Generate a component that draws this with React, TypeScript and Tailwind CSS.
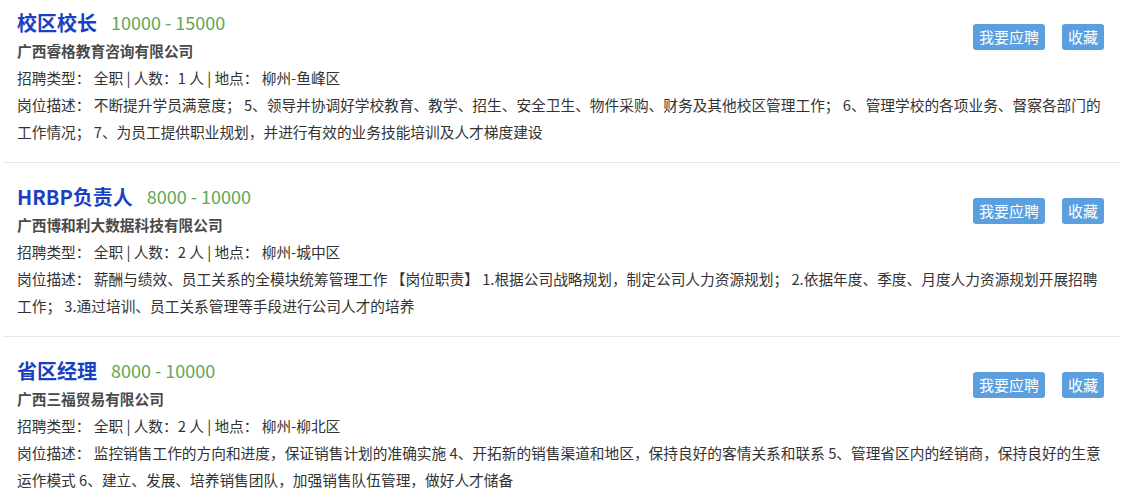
import { JSX } from 'react'

interface Job {
  title: string
  salary: string
  company: string
  type: string
  count: number
  location: string
  description: string
}

const JOBS: Job[] = [
  {
    title: '校区校长',
    salary: '10000 - 15000',
    company: '广西睿格教育咨询有限公司',
    type: '全职',
    count: 1,
    location: '柳州-鱼峰区',
    description:
      '不断提升学员满意度； 5、领导并协调好学校教育、教学、招生、安全卫生、物件采购、财务及其他校区管理工作； 6、管理学校的各项业务、督察各部门的工作情况； 7、为员工提供职业规划，并进行有效的业务技能培训及人才梯度建设'
  },
  {
    title: 'HRBP负责人',
    salary: '8000 - 10000',
    company: '广西博和利大数据科技有限公司',
    type: '全职',
    count: 2,
    location: '柳州-城中区',
    description:
      '薪酬与绩效、员工关系的全模块统筹管理工作 【岗位职责】 1.根据公司战略规划，制定公司人力资源规划； 2.依据年度、季度、月度人力资源规划开展招聘工作； 3.通过培训、员工关系管理等手段进行公司人才的培养'
  },
  {
    title: '省区经理',
    salary: '8000 - 10000',
    company: '广西三福贸易有限公司',
    type: '全职',
    count: 2,
    location: '柳州-柳北区',
    description:
      '监控销售工作的方向和进度，保证销售计划的准确实施 4、开拓新的销售渠道和地区，保持良好的客情关系和联系 5、管理省区内的经销商，保持良好的生意运作模式 6、建立、发展、培养销售团队，加强销售队伍管理，做好人才储备'
  }
]

function JobCard({ job }: { job: Job }): JSX.Element {
  const info = `招聘类型： ${job.type} | 人数：${job.count} 人 | 地点： ${job.location}`
  const desc = `岗位描述： ${job.description}`

  return (
    <div className="border-b border-[#e6e6e6] pt-[19px] pr-[16px] pb-[17px] pl-[14px]">
      <div className="flex items-start justify-between">
        <div>
          <div className="flex h-[29px] items-center">
            <h3 className="text-[20px] font-bold leading-[29px] text-[#1b3fc2]">{job.title}</h3>
            <span className="ml-[14px] text-[18px] leading-[29px] text-[#62a654]">{job.salary}</span>
          </div>
          <p className="text-[14.7px] font-bold leading-[27px] text-[#4a4a4a]">{job.company}</p>
          <p className="text-[14.7px] leading-[27px] text-[#333]">{info}</p>
        </div>
        <div className="mt-[16px] flex gap-[17px]">
          <button className="h-[26px] rounded-[3px] bg-[#5b9fde] px-[6px] text-[15px] leading-[26px] text-white">
            我要应聘
          </button>
          <button className="h-[26px] rounded-[3px] bg-[#5b9fde] px-[6px] text-[15px] leading-[26px] text-white">
            收藏
          </button>
        </div>
      </div>
      <p className="text-[14.7px] leading-[27px] text-[#333]">{desc}</p>
    </div>
  )
}

export default function App(): JSX.Element {
  return (
    <div
      className="h-[500px] w-[1130px] overflow-hidden bg-white"
      style={{ fontFamily: '"Noto Sans CJK SC", "Microsoft YaHei", sans-serif' }}
    >
      <div className="-mt-[11px] mr-[10px] ml-[3px]">
        {JOBS.map((job) => (
          <JobCard key={job.title} job={job} />
        ))}
      </div>
    </div>
  )
}
